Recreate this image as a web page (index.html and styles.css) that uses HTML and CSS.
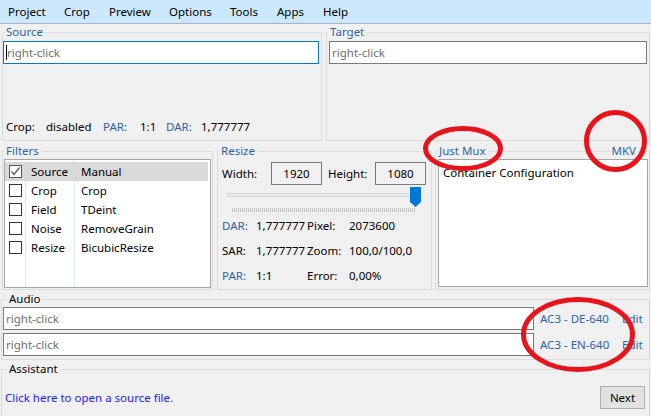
FILE: index.html
```html
<!DOCTYPE html>
<html lang="en">
<head>
  <meta charset="UTF-8">
  <title>StaxRip</title>
  <link rel="stylesheet" href="styles.css">
</head>
<body>

<!-- menu -->
<div class="menu">
  <span>Project</span>
  <span>Crop</span>
  <span>Preview</span>
  <span>Options</span>
  <span>Tools</span>
  <span>Apps</span>
  <span>Help</span>
</div>

<!-- source / target -->
<div class="top-row">
  <fieldset class="group">
    <legend>Source</legend>
    <div class="textbox focused source-box"><span class="caret"></span>right-click</div>
    <div class="crop-info">
      <span class="w-crop">Crop:</span><span class="w-disabled">disabled</span><span class="blue w-par">PAR:</span><span class="w-one">1:1</span><span class="blue w-dar">DAR:</span><span>1,777777</span>
    </div>
  </fieldset>
  <fieldset class="group">
    <legend>Target</legend>
    <div class="textbox target-box">right-click</div>
  </fieldset>
</div>

<!-- filters / resize / container -->
<div class="mid-row">
  <fieldset class="group">
    <legend>Filters</legend>
    <div class="filter-list">
      <div class="filter selected">
        <span class="check"><svg width="11" height="11" viewBox="0 0 11 11"><polyline points="1.5,5.5 4,8.5 9.5,1.5" fill="none" stroke="#555" stroke-width="1.3"/></svg></span>
        <span class="cat">Source</span><span>Manual</span>
      </div>
      <div class="filter"><span class="check"></span><span class="cat">Crop</span><span>Crop</span></div>
      <div class="filter"><span class="check"></span><span class="cat">Field</span><span>TDeint</span></div>
      <div class="filter"><span class="check"></span><span class="cat">Noise</span><span>RemoveGrain</span></div>
      <div class="filter"><span class="check"></span><span class="cat">Resize</span><span>BicubicResize</span></div>
    </div>
  </fieldset>

  <fieldset class="group resize">
    <legend>Resize</legend>
    <div class="size-row">
      <span class="size-label">Width:</span><span class="size-box">1920</span>
      <span class="size-label height-label">Height:</span><span class="size-box">1080</span>
    </div>
    <svg class="slider" width="200" height="27" viewBox="0 0 200 27">
      <rect x="5.5" y="7.5" width="188" height="3" fill="#e7eaea" stroke="#d6d6d6"/>
      <line x1="10" y1="24" x2="194" y2="24" stroke="#c4c4c4" stroke-width="4" stroke-dasharray="1 1"/>
      <polygon points="188,1 199,1 199,16 193.5,21 188,16" fill="#0078d7"/>
    </svg>
    <div class="info-row"><span class="blue">DAR:</span><span>1,777777</span><span>Pixel:</span><span>2073600</span></div>
    <div class="info-row"><span>SAR:</span><span>1,777777</span><span>Zoom:</span><span>100,0/100,0</span></div>
    <div class="info-row"><span class="blue">PAR:</span><span>1:1</span><span>Error:</span><span>0,00%</span></div>
  </fieldset>

  <div class="mux">
    <fieldset class="group">
      <legend>Just Mux</legend>
      <div class="mux-box">Container Configuration</div>
    </fieldset>
    <span class="mux-format">MKV</span>
  </div>
</div>

<!-- audio -->
<fieldset class="group audio">
  <legend>Audio</legend>
  <div class="audio-row">
    <div class="textbox audio-box">right-click</div>
    <span class="blue audio-name">AC3 - DE-640</span><span class="blue">Edit</span>
  </div>
  <div class="audio-row">
    <div class="textbox audio-box">right-click</div>
    <span class="blue audio-name">AC3 - EN-640</span><span class="blue">Edit</span>
  </div>
</fieldset>

<!-- assistant -->
<fieldset class="group assistant">
  <legend>Assistant</legend>
  <div class="assist-row">
    <span class="link">Click here to open a source file.</span>
    <span class="button">Next</span>
  </div>
</fieldset>

<!-- red annotation marks -->
<svg class="marks" width="651" height="416" viewBox="0 0 651 416">
  <ellipse cx="463" cy="148.5" rx="37.5" ry="20" fill="none" stroke="#e8141c" stroke-width="5"/>
  <ellipse cx="615.5" cy="141" rx="29" ry="28.5" fill="none" stroke="#e8141c" stroke-width="5"/>
  <ellipse cx="578" cy="334.5" rx="54.5" ry="35" fill="none" stroke="#e8141c" stroke-width="5"/>
</svg>

</body>
</html>
```

FILE: styles.css
```css
body {
  margin: 0;
  width: 651px;
  height: 416px;
  overflow: hidden;
  position: relative;
  background-color: #f0f0f0;
  font-family: "Noto Sans", "Segoe UI", sans-serif;
  font-size: 11.5px;
  color: #000;
}

.blue {
  color: #2b63ad;
}

/* menu */
.menu {
  display: grid;
  grid-template-columns: 56px 45px 60px 61px 47px 46px auto;
  align-items: center;
  height: 23px;
  padding-left: 8px;
  background-color: #cce8ff;
  border-bottom: 1px solid #a9b6c2;
}

/* group boxes */
fieldset.group {
  margin: 0;
  padding: 0;
  min-width: 0;
  border: 1px solid #dcdcdc;
}

fieldset.group legend {
  padding: 0 2px;
  margin-left: 1px;
  height: 16px;
  line-height: 16px;
  color: #2b63ad;
}

.textbox {
  box-sizing: border-box;
  height: 23px;
  line-height: 21px;
  padding-left: 2px;
  background-color: #fff;
  border: 1px solid #7a7a7a;
  color: #6d6d6d;
  white-space: nowrap;
}

.textbox.focused {
  border-color: #0078d7;
}

.caret {
  display: inline-block;
  width: 1px;
  height: 15px;
  vertical-align: -3px;
  background-color: #000;
}

/* top row */
.top-row {
  display: grid;
  grid-template-columns: 320px 324px;
  column-gap: 4px;
  padding-left: 2px;
}

.top-row fieldset.group {
  padding-bottom: 5px;
}

.source-box {
  margin: 1px 2px 0 0;
}

.target-box {
  margin: 1px 0 0 2px;
  width: 318px;
}

.crop-info {
  margin-top: 55px;
  padding-left: 3px;
  line-height: 16px;
  white-space: nowrap;
}

.crop-info span {
  display: inline-block;
}

.w-crop { width: 40px; }
.w-disabled { width: 57px; }
.w-par { width: 37px; }
.w-one { width: 26px; }
.w-dar { width: 35px; }

/* middle row */
.mid-row {
  display: grid;
  grid-template-columns: 211px 215px 214px;
  column-gap: 4px;
  margin-top: 2px;
  padding-left: 2px;
}

.mid-row .mux {
  margin-left: -1px;
}

.filter-list {
  box-sizing: border-box;
  width: 207px;
  height: 129px;
  margin: 0 0 1px 1px;
  padding-top: 2px;
  background: #fff linear-gradient(to right,
      transparent 20px, #dde9f6 20px, #dde9f6 21px, transparent 21px,
      transparent 69px, #dde9f6 69px, #dde9f6 70px, transparent 70px);
  border: 1px solid #a5a5a5;
}

.filter {
  display: grid;
  grid-template-columns: 20px 49px auto;
  align-items: center;
  height: 19px;
  margin-right: 2px;
}

.filter > span:last-child {
  padding-left: 7px;
}

.filter.selected {
  background-color: #d9d9d9;
}

.check {
  box-sizing: border-box;
  width: 13px;
  height: 13px;
  margin-left: 4px;
  background-color: #fff;
  border: 1px solid #333;
  display: flex;
  align-items: center;
  justify-content: center;
}

.filter.selected .check {
  border-color: #555;
}

.cat {
  padding-left: 6px;
}

/* resize */
.resize .size-row,
.resize .slider,
.resize .info-row {
  margin-left: 4px;
}

.size-row {
  display: flex;
  align-items: center;
  margin-top: 3px;
}

.size-label {
  width: 49px;
}

.height-label {
  width: 47px;
  margin-left: 6px;
}

.size-box {
  box-sizing: border-box;
  width: 51px;
  height: 23px;
  line-height: 21px;
  text-align: center;
  border: 1px solid #7a7a7a;
}

.slider {
  display: block;
  margin-top: 1px;
}

.info-row {
  display: grid;
  grid-template-columns: 34px 51px 42px auto;
  height: 25px;
  line-height: 25px;
  white-space: nowrap;
}

/* container */
.mux {
  position: relative;
}

.mux-box {
  box-sizing: border-box;
  height: 128px;
  margin: 0 1px 2px 2px;
  padding: 5px 0 0 4px;
  line-height: 16px;
  background-color: #fff;
  border: 1px solid #a5a5a5;
}

.mux-format {
  position: absolute;
  top: 0;
  right: 12px;
  padding: 0 2px;
  line-height: 16px;
  background-color: #f0f0f0;
  color: #2b63ad;
}

/* audio */
fieldset.audio {
  margin: 1px 1px 0 1px;
  padding-bottom: 3px;
}

fieldset.audio legend,
fieldset.assistant legend {
  margin-left: 5px;
  color: #000;
}

.audio-row {
  display: flex;
  align-items: center;
  margin-left: 1px;
}

.audio-row + .audio-row {
  margin-top: 3px;
}

.audio-box {
  width: 531px;
}

.audio-name {
  width: 82px;
  margin-left: 6px;
  white-space: nowrap;
}

/* assistant */
fieldset.assistant {
  margin: 1px 1px 0 1px;
  padding-bottom: 8px;
}

.assist-row {
  display: flex;
  align-items: center;
  justify-content: space-between;
  margin-top: 9px;
  padding: 0 4px 0 3px;
}

.link {
  color: #2121ff;
}

.button {
  box-sizing: border-box;
  width: 45px;
  height: 23px;
  line-height: 21px;
  text-align: center;
  background-color: #e1e1e1;
  border: 1px solid #adadad;
}

.marks {
  position: absolute;
  top: 0;
  left: 0;
  pointer-events: none;
}
```
